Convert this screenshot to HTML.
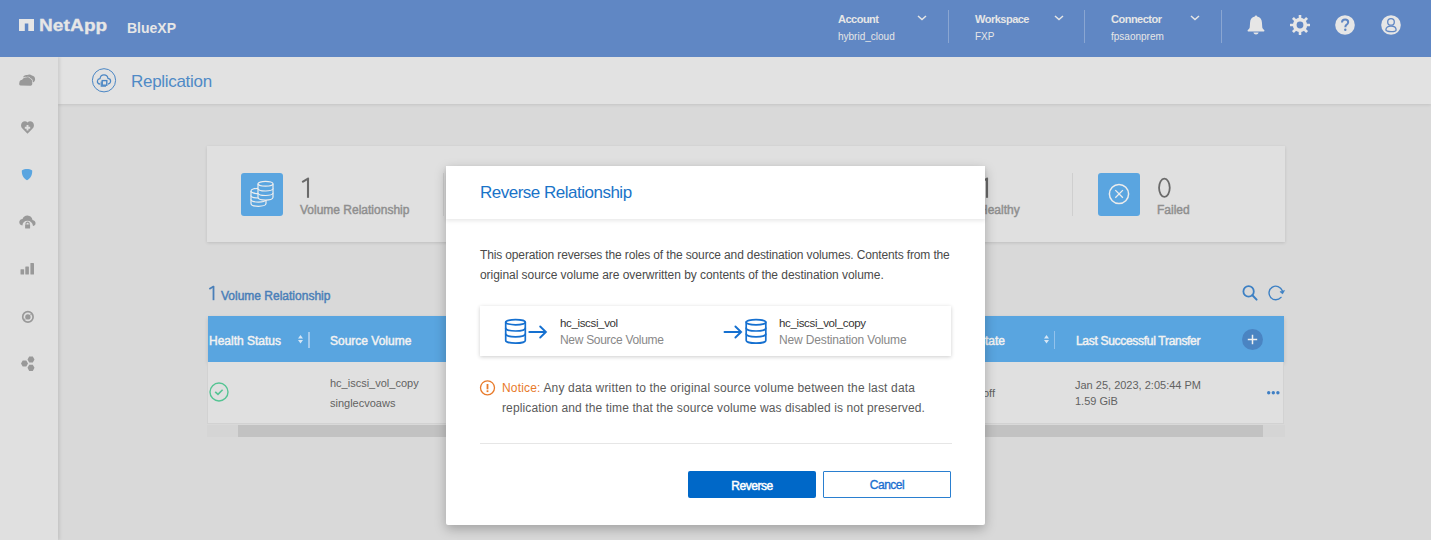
<!DOCTYPE html>
<html><head><meta charset="utf-8">
<style>
*{box-sizing:border-box;margin:0;padding:0}
html,body{width:1431px;height:540px;overflow:hidden;font-family:"Liberation Sans",sans-serif;background:#d9d9d9;position:relative}
.abs{position:absolute}
svg{position:absolute;overflow:visible}
#hdr{left:0;top:0;width:1431px;height:57px;background:#6087c4;z-index:3}
#side{left:0;top:57px;width:58px;height:483px;background:#e0e0e0;box-shadow:2px 0 3px rgba(0,0,0,.09);z-index:2}
#tbar{left:58px;top:57px;width:1373px;height:47px;background:#e2e2e2;box-shadow:0 1px 3px rgba(0,0,0,.1);z-index:1}
.t{position:absolute;white-space:nowrap;line-height:1}
#card{left:207px;top:146px;width:1078px;height:96px;background:#e0e0e0;box-shadow:0 1px 3px rgba(0,0,0,.12)}
.sicon{position:absolute;width:42px;height:43px;background:#5aa5e0;border-radius:3px}
.sep{position:absolute;width:1px;background:#cfcfcf}
.hl{font-size:11px;font-weight:bold;color:#e6e6e6;letter-spacing:-0.5px}
.hv{font-size:10px;color:#e6e6e6}
.hsep{position:absolute;top:10px;width:1px;height:33px;background:#8aa6d2}
#thead{left:208px;top:316px;width:1076px;height:46px;background:#59a5e0;box-shadow:0 2px 4px rgba(0,0,0,.14)}
.th{font-size:12px;color:#f2f2f2;-webkit-text-stroke:0.45px #f2f2f2}
#row{left:207px;top:362px;width:1077px;height:62px;background:#e0e0e0;border:1px solid #d2d2d2;border-top:none}
#scroll{left:207px;top:425px;width:1078px;height:12px;background:#d5d5d5}
#thumb{left:238px;top:425px;width:1025px;height:12px;background:#c2c2c2}
.cell{font-size:11px;color:#626262}
#modal{left:446px;top:166px;width:539px;height:359px;background:#fff;border-radius:2px;box-shadow:0 4px 12px rgba(0,0,0,.26);z-index:5}
#mhead{left:0;top:0;width:539px;height:53px;background:#fff;box-shadow:0 2px 4px rgba(0,0,0,.09)}
</style></head><body>
<div id="hdr" class="abs">
  <svg style="left:19px;top:19px" width="15" height="12" viewBox="0 0 15 12"><path d="M0 0H15V12H9.3V4.6H5.8V12H0Z" fill="#e6e6e6"/></svg>
  <div class="t" style="left:39px;top:17px;font-size:17px;font-weight:bold;color:#e6e6e6;letter-spacing:0.1px;transform:scaleX(1.12);transform-origin:0 0;-webkit-text-stroke:0.3px #e6e6e6">NetApp</div>
  <div class="t" style="left:127px;top:21px;font-size:14px;font-weight:bold;color:#e6e6e6">BlueXP</div>

  <div class="t hl" style="left:838px;top:14px">Account</div>
  <div class="t hv" style="left:838px;top:32px">hybrid_cloud</div>
  <svg style="left:917px;top:15px" width="10" height="6" viewBox="0 0 10 6"><path d="M1 1L5 4.5L9 1" stroke="#e6e6e6" stroke-width="1.5" fill="none"/></svg>
  <div class="hsep" style="left:948px"></div>
  <div class="t hl" style="left:975px;top:14px">Workspace</div>
  <div class="t hv" style="left:975px;top:32px">FXP</div>
  <svg style="left:1054px;top:15px" width="10" height="6" viewBox="0 0 10 6"><path d="M1 1L5 4.5L9 1" stroke="#e6e6e6" stroke-width="1.5" fill="none"/></svg>
  <div class="hsep" style="left:1084px"></div>
  <div class="t hl" style="left:1111px;top:14px">Connector</div>
  <div class="t hv" style="left:1111px;top:32px">fpsaonprem</div>
  <svg style="left:1190px;top:15px" width="10" height="6" viewBox="0 0 10 6"><path d="M1 1L5 4.5L9 1" stroke="#e6e6e6" stroke-width="1.5" fill="none"/></svg>
  <div class="hsep" style="left:1221px"></div>

  <!-- bell -->
  <svg style="left:1247px;top:15px" width="18" height="20" viewBox="0 0 18 20"><path d="M9 0.4C9.7 0.4 10.1 0.9 10.2 1.4C13.2 1.9 14.8 4.2 14.9 7.2L15.3 12.4C15.5 13.6 16.5 14.4 17.2 15C17.6 15.4 17.5 16.4 16.8 16.4H1.2C0.5 16.4 0.4 15.4 0.8 15C1.5 14.4 2.5 13.6 2.7 12.4L3.1 7.2C3.2 4.2 4.8 1.9 7.8 1.4C7.9 0.9 8.3 0.4 9 0.4Z" fill="#e6e6e6"/><path d="M6.4 17.6H11.6C11.3 18.9 10.3 19.6 9 19.6C7.7 19.6 6.7 18.9 6.4 17.6Z" fill="#e6e6e6"/></svg>
  <!-- gear -->
  <svg style="left:1290px;top:15px" width="20" height="20" viewBox="0 0 20 20"><g fill="#e6e6e6"><rect x="8.7" y="0" width="2.6" height="20" rx="0.4"/><rect x="8.7" y="0" width="2.6" height="20" rx="0.4" transform="rotate(45 10 10)"/><rect x="8.7" y="0" width="2.6" height="20" rx="0.4" transform="rotate(90 10 10)"/><rect x="8.7" y="0" width="2.6" height="20" rx="0.4" transform="rotate(135 10 10)"/><circle cx="10" cy="10" r="7.2"/></g><circle cx="10" cy="10" r="3.4" fill="#6087c4"/></svg>
  <!-- help -->
  <svg style="left:1335px;top:15px" width="20" height="20" viewBox="0 0 20 20"><circle cx="10" cy="10" r="9.8" fill="#e6e6e6"/><path d="M7 7.6C7 5.8 8.3 4.6 10.1 4.6C11.9 4.6 13.2 5.8 13.2 7.3C13.2 8.7 12.3 9.3 11.4 9.9C10.7 10.4 10.4 10.8 10.4 11.7V12.3" stroke="#6087c4" stroke-width="2" fill="none"/><circle cx="10.3" cy="14.8" r="1.2" fill="#6087c4"/></svg>
  <!-- user -->
  <svg style="left:1381px;top:15px" width="20" height="20" viewBox="0 0 20 20"><circle cx="10" cy="10" r="9.8" fill="#e6e6e6"/><circle cx="10" cy="6.9" r="3.3" fill="none" stroke="#6087c4" stroke-width="1.3"/><path d="M4.9 14.9C4.9 12.4 7.1 11.2 10 11.2C12.9 11.2 15.1 12.4 15.1 14.9C15.1 15.9 12.9 16.6 10 16.6C7.1 16.6 4.9 15.9 4.9 14.9Z" fill="none" stroke="#6087c4" stroke-width="1.3"/></svg>
</div>

<div id="side" class="abs">
  <!-- clouds -->
  <svg style="left:15px;top:13px" width="25" height="20" viewBox="0 0 25 20"><path d="M8 7.6C8.4 5.6 10.4 4.6 12.3 5.1C13.5 4.3 15.6 4.4 16.9 5.5C18.9 5.7 20.3 7.5 20.1 9.5C20 11 19.2 12 18.1 12.3Z" fill="#999"/><path d="M5.6 15.6C4.2 15.3 3.9 13.6 4.4 12.4C4.5 10.9 5.8 9.8 7.2 9.8C7.8 8.1 9.6 7.1 11.3 7.5C12.4 6.9 14.3 7.3 15.1 8.7C16.6 9.1 17.5 10.8 17.2 12.4C17.6 13.9 17 15.6 15.4 15.7Z" fill="#999" stroke="#e0e0e0" stroke-width="1.1" paint-order="stroke"/></svg>
  <!-- heart plus -->
  <svg style="left:21px;top:64px" width="13" height="13" viewBox="0 0 13 13"><path d="M6.5 12.8L1.4 7.6C-0.4 5.8 -0.4 2.9 1.3 1.2C2.9 -0.3 5.2 -0.2 6.5 1.4C7.8 -0.2 10.1 -0.3 11.7 1.2C13.4 2.9 13.4 5.8 11.6 7.6Z" fill="#999"/><path d="M6.5 4.1V9.5M3.8 6.8H9.2" stroke="#e0e0e0" stroke-width="1.9"/></svg>
  <!-- shield -->
  <svg style="left:21px;top:112px" width="12" height="12" viewBox="0 0 12 12"><path d="M0.8 1.4C2.5 0.4 4.2 0 6 0C7.8 0 9.5 0.4 11.2 1.4C11.5 5.6 9.6 9.2 6 11.2C2.4 9.2 0.5 5.6 0.8 1.4Z" fill="#5aa5e0"/></svg>
  <!-- cloud lock -->
  <svg style="left:19px;top:158px" width="17" height="14" viewBox="0 0 17 14"><path d="M3.4 10.6C1.3 10.3 0 8.7 0.3 6.8C0.5 5.2 1.9 4 3.5 4C4.3 1.7 6.2 0.4 8.5 0.5C11.2 0.6 13.2 2.5 13.5 5C15.5 5.2 16.8 6.8 16.5 8.7C16.3 10 15.3 10.8 14 11C13.6 7.8 11.4 5.8 8.5 5.8C5.6 5.8 3.6 7.8 3.4 10.6Z" fill="#999"/><rect x="6.1" y="9.6" width="5" height="3.8" rx="0.5" fill="#999"/><path d="M7 9.8V8.6C7 7.7 7.7 7.1 8.6 7.1C9.5 7.1 10.2 7.7 10.2 8.6V9.8" stroke="#999" stroke-width="1.1" fill="none"/></svg>
  <!-- bars -->
  <svg style="left:20px;top:206px" width="15" height="12" viewBox="0 0 15 12"><rect x="0.5" y="6.2" width="3.6" height="5.3" rx="0.6" fill="#999"/><rect x="5.3" y="3.5" width="3.6" height="8" rx="0.6" fill="#999"/><rect x="10.4" y="0" width="3.6" height="11.5" rx="0.6" fill="#999"/></svg>
  <!-- sync circle -->
  <svg style="left:21px;top:253px" width="14" height="14" viewBox="0 0 14 14"><circle cx="6.9" cy="6.9" r="5.2" fill="none" stroke="#999" stroke-width="1.7"/><circle cx="6.9" cy="6.9" r="2.7" fill="#999"/><path d="M9.1 4.2L10.5 3.5L10.4 5.6Z M4.7 9.6L3.3 10.3L3.4 8.2Z" fill="#999"/></svg>
  <!-- hexes -->
  <svg style="left:20px;top:299px" width="15" height="16" viewBox="0 0 15 16"><path d="M1 7.5L2.7 4.5H6.3L8 7.5L6.3 10.5H2.7Z M7.5 3.5L9.2 0.4H12.8L14.5 3.5L12.8 6.6H9.2Z M7.5 11.8L9.2 8.7H12.8L14.5 11.8L12.8 14.9H9.2Z" fill="#999"/></svg>
</div>

<div id="tbar" class="abs">
  <svg style="left:34px;top:11px" width="24" height="24" viewBox="0 0 24 24"><circle cx="12" cy="12.3" r="11.6" fill="none" stroke="#4a86c4" stroke-width="1"/><path d="M8.2 16.2C6.3 15.9 5.2 14.6 5.4 13C5.6 11.6 6.7 10.7 8 10.6C8.3 8.3 10 6.9 12 6.9C14.1 6.9 15.7 8.4 16 10.4C17.6 10.6 18.7 11.8 18.6 13.3C18.5 14.8 17.4 15.9 15.9 16.1" fill="none" stroke="#4a86c4" stroke-width="1.2"/><rect x="10.2" y="12.6" width="4.6" height="4.6" fill="none" stroke="#4a86c4" stroke-width="1.4"/><path d="M9.2 13.4V18.2H14" fill="none" stroke="#4a86c4" stroke-width="1.1"/></svg>
  <div class="t" style="left:73px;top:16px;font-size:17px;color:#4f8ac6;letter-spacing:-0.3px">Replication</div>
</div>

<div id="card" class="abs">
  <div class="sicon" style="left:34px;top:27px">
    <svg style="left:9px;top:8px" width="24" height="27" viewBox="0 0 24 27"><g fill="#5aa5e0" stroke="#eeeeee" stroke-width="1.2"><path d="M1 10V22.5C1 24.2 4.4 25.3 8.5 25.3C12.6 25.3 16 24.2 16 22.5V10"/><path d="M1 14.2C1 15.9 4.4 17 8.5 17C12.6 17 16 15.9 16 14.2M1 18.3C1 20 4.4 21.1 8.5 21.1C12.6 21.1 16 20 16 18.3"/><ellipse cx="8.5" cy="10" rx="7.5" ry="2.7"/><path d="M8 2.8V16.3C8 18 11.4 19.1 15.5 19.1C19.6 19.1 23 18 23 16.3V2.8"/><path d="M8 7.2C8 8.9 11.4 10 15.5 10C19.6 10 23 8.9 23 7.2M8 11.7C8 13.4 11.4 14.5 15.5 14.5C19.6 14.5 23 13.4 23 11.7"/><ellipse cx="15.5" cy="2.8" rx="7.5" ry="2.4"/></g></svg>
  </div>
  <svg style="left:94px;top:31px" width="12" height="22" viewBox="0 0 12 22"><path d="M7 1.6V20.8" stroke="#6a6a6a" stroke-width="2.1"/><path d="M1.2 5.2L7.8 1.2" stroke="#6a6a6a" stroke-width="2"/></svg>
  <div class="t" style="left:93px;top:58px;font-size:12px;color:#8f8f8f;-webkit-text-stroke:0.45px #8f8f8f">Volume Relationship</div>
  <div class="sep" style="left:236px;top:27px;height:43px"></div>
  <svg style="left:773px;top:31px" width="12" height="22" viewBox="0 0 12 22"><path d="M7 1.6V20.8" stroke="#6a6a6a" stroke-width="2.1"/><path d="M1.2 5.2L7.8 1.2" stroke="#6a6a6a" stroke-width="2"/></svg>
  <div class="t" style="left:772px;top:58px;font-size:12px;color:#8f8f8f;-webkit-text-stroke:0.45px #8f8f8f">Healthy</div>
  <div class="sep" style="left:865px;top:27px;height:43px"></div>
  <div class="sicon" style="left:891px;top:27px">
    <svg style="left:10px;top:10px" width="22" height="22" viewBox="0 0 22 22"><circle cx="11" cy="11" r="9.6" fill="none" stroke="#ececec" stroke-width="1.5"/><path d="M7.3 7.1L14.9 14.7M14.9 7.1L7.3 14.7" stroke="#ececec" stroke-width="1.3"/></svg>
  </div>
  <svg style="left:950px;top:31px" width="15" height="22" viewBox="0 0 15 22"><ellipse cx="7.4" cy="10.8" rx="5.35" ry="9.1" fill="none" stroke="#6a6a6a" stroke-width="1.8"/></svg>
  <div class="t" style="left:950px;top:58px;font-size:12px;color:#8f8f8f;-webkit-text-stroke:0.45px #8f8f8f">Failed</div>
</div>

<svg style="left:208px;top:285px" width="8" height="16" viewBox="0 0 8 16"><path d="M5.5 1.2V15.2" stroke="#4a7fb8" stroke-width="1.8"/><path d="M1.3 3.9L5.9 1.2" stroke="#4a7fb8" stroke-width="1.7"/></svg>
<div class="t" style="left:221px;top:290px;font-size:12px;color:#4a7fb8;-webkit-text-stroke:0.45px #4a7fb8">Volume Relationship</div>
<svg style="left:1242px;top:285px" width="16" height="16" viewBox="0 0 16 16"><circle cx="6.6" cy="6.4" r="5.2" fill="none" stroke="#3d80c4" stroke-width="1.8"/><path d="M10.4 10.2L14.6 14.6" stroke="#3d80c4" stroke-width="2" stroke-linecap="round"/></svg>
<svg style="left:1265px;top:282px" width="24" height="22" viewBox="0 0 24 22"><path d="M16 15.4A6.8 6.8 0 1 1 17.2 8.6" fill="none" stroke="#3d80c4" stroke-width="1.4" stroke-linecap="round"/><path d="M14.9 9.7L19.6 8.4L17.6 11.9Z" fill="#3d80c4" stroke="#3d80c4" stroke-width="0.5" stroke-linejoin="round"/></svg>

<div id="thead" class="abs">
  <div class="t th" style="left:1px;top:19px">Health Status</div>
  <svg style="left:90px;top:19px" width="5" height="9" viewBox="0 0 5 9"><path d="M0 3.4L2.5 0L5 3.4ZM0 5L2.5 8.6L5 5Z" fill="#d6e6f5"/></svg>
  <div class="abs" style="left:100.3px;top:16px;width:1.3px;height:16px;background:#a3caed"></div>
  <div class="t th" style="left:122px;top:19px">Source Volume</div>
  <div class="t th" style="right:279px;top:19px">State</div>
  <svg style="left:836px;top:19px" width="5" height="9" viewBox="0 0 5 9"><path d="M0 3.4L2.5 0L5 3.4ZM0 5L2.5 8.6L5 5Z" fill="#d6e6f5"/></svg>
  <div class="abs" style="left:846px;top:15px;width:1px;height:18px;background:#92c2ec"></div>
  <div class="t th" style="left:868px;top:19px;letter-spacing:-0.3px">Last Successful Transfer</div>
  <svg style="left:1034px;top:13px" width="21" height="21" viewBox="0 0 21 21"><circle cx="10.5" cy="10.5" r="10.5" fill="#4a84c2"/><path d="M10.5 5.8V15.2M5.8 10.5H15.2" stroke="#f0f0f0" stroke-width="1.5"/></svg>
</div>
<div id="row" class="abs">
  <svg style="left:1px;top:20px" width="20" height="20" viewBox="0 0 20 20"><circle cx="10" cy="10" r="9" fill="none" stroke="#55c493" stroke-width="1.4"/><path d="M6.2 9.8L9 12.4L13.6 7.8" fill="none" stroke="#55c493" stroke-width="1.6"/></svg>
  <div class="t cell" style="left:122px;top:16px">hc_iscsi_vol_copy</div>
  <div class="t cell" style="left:122px;top:36px">singlecvoaws</div>
  <div class="t cell" style="right:288px;top:26px">off</div>
  <div class="t cell" style="left:867px;top:18px">Jan 25, 2023, 2:05:44 PM</div>
  <div class="t cell" style="left:867px;top:34px">1.59 GiB</div>
  <svg style="left:1059px;top:29px" width="14" height="4" viewBox="0 0 14 4"><circle cx="1.7" cy="1.7" r="1.7" fill="#3f7fc4"/><circle cx="6.3" cy="1.7" r="1.7" fill="#3f7fc4"/><circle cx="10.9" cy="1.7" r="1.7" fill="#3f7fc4"/></svg>
</div>
<div id="scroll" class="abs"></div>
<div id="thumb" class="abs"></div>

<div id="modal" class="abs">
  <div id="mhead" class="abs">
    <div class="t" style="left:34px;top:18px;font-size:17px;color:#1a73c8;letter-spacing:-0.5px">Reverse Relationship</div>
  </div>
  <div class="t" style="left:34px;top:79px;font-size:12px;color:#4a4a4a;line-height:20px;letter-spacing:-0.14px">This operation reverses the roles of the source and destination volumes. Contents from the</div>
  <div class="t" style="left:34px;top:99px;font-size:12px;color:#4a4a4a;line-height:20px;letter-spacing:-0.05px">original source volume are overwritten by contents of the destination volume.</div>
  <div class="abs" style="left:34px;top:140px;width:471px;height:50px;background:#fff;box-shadow:0 1px 4px rgba(0,0,0,.2)">
    <svg style="left:25px;top:13px" width="44" height="26" viewBox="0 0 44 26"><g fill="none" stroke="#1570d0" stroke-width="1.7" stroke-linecap="round"><ellipse cx="10.5" cy="3.2" rx="9.8" ry="2.6"/><path d="M0.7 3.2V21.4C0.7 23 5 24.2 10.5 24.2C16 24.2 20.3 23 20.3 21.4V3.2"/><path d="M0.7 9.2C0.7 10.8 5 12 10.5 12C16 12 20.3 10.8 20.3 9.2M0.7 15.1C0.7 16.7 5 17.9 10.5 17.9C16 17.9 20.3 16.7 20.3 15.1"/><path d="M24.3 13H40.8M35.2 7.5L40.9 13L35.2 18.5" stroke-width="1.9"/></g></svg>
    <div class="t" style="left:80px;top:12px;font-size:11.5px;color:#333;letter-spacing:-0.35px">hc_iscsi_vol</div>
    <div class="t" style="left:80px;top:28px;font-size:12px;color:#888;letter-spacing:-0.3px">New Source Volume</div>
    <svg style="left:244px;top:13px" width="44" height="26" viewBox="0 0 44 26"><g fill="none" stroke="#1570d0" stroke-width="1.7" stroke-linecap="round"><path d="M0.5 13H17M11.4 7.5L17.1 13L11.4 18.5" stroke-width="1.9"/><ellipse cx="32" cy="3.2" rx="9.8" ry="2.6"/><path d="M22.2 3.2V21.4C22.2 23 26.5 24.2 32 24.2C37.5 24.2 41.8 23 41.8 21.4V3.2"/><path d="M22.2 9.2C22.2 10.8 26.5 12 32 12C37.5 12 41.8 10.8 41.8 9.2M22.2 15.1C22.2 16.7 26.5 17.9 32 17.9C37.5 17.9 41.8 16.7 41.8 15.1"/></g></svg>
    <div class="t" style="left:299px;top:12px;font-size:11.5px;color:#333;letter-spacing:-0.35px">hc_iscsi_vol_copy</div>
    <div class="t" style="left:299px;top:28px;font-size:12px;color:#888;letter-spacing:-0.15px">New Destination Volume</div>
  </div>
  <svg style="left:34px;top:214px" width="15" height="16" viewBox="0 0 15 16"><circle cx="7.5" cy="7.8" r="7" fill="none" stroke="#e87a2a" stroke-width="1.3"/><path d="M7.5 4V9.3" stroke="#e87a2a" stroke-width="1.8"/><rect x="6.6" y="10.3" width="1.8" height="1.8" fill="#e87a2a"/></svg>
  <div class="t" style="left:56px;top:212px;font-size:12px;color:#5a5a5a;line-height:20px;letter-spacing:0.17px"><span style="color:#e87a2a">Notice:</span> Any data written to the original source volume between the last data</div>
  <div class="t" style="left:56px;top:232px;font-size:12px;color:#5a5a5a;line-height:20px;letter-spacing:0.12px">replication and the time that the source volume was disabled is not preserved.</div>
  <div class="abs" style="left:34px;top:277px;width:472px;height:1px;background:#e6e6e6"></div>
  <div class="abs" style="left:242px;top:305px;width:128px;height:27px;background:#0068c8;border-radius:2px"></div>
  <div class="t" style="left:242px;top:314px;width:128px;text-align:center;font-size:12px;color:#fff;-webkit-text-stroke:0.45px #fff;letter-spacing:-0.45px">Reverse</div>
  <div class="abs" style="left:377px;top:305px;width:128px;height:27px;border:1px solid #2a7fd0;border-radius:1px"></div>
  <div class="t" style="left:377px;top:313px;width:128px;text-align:center;font-size:12px;color:#1a6fd0;letter-spacing:-0.5px;-webkit-text-stroke:0.35px #1a6fd0">Cancel</div>
</div>
</body></html>
